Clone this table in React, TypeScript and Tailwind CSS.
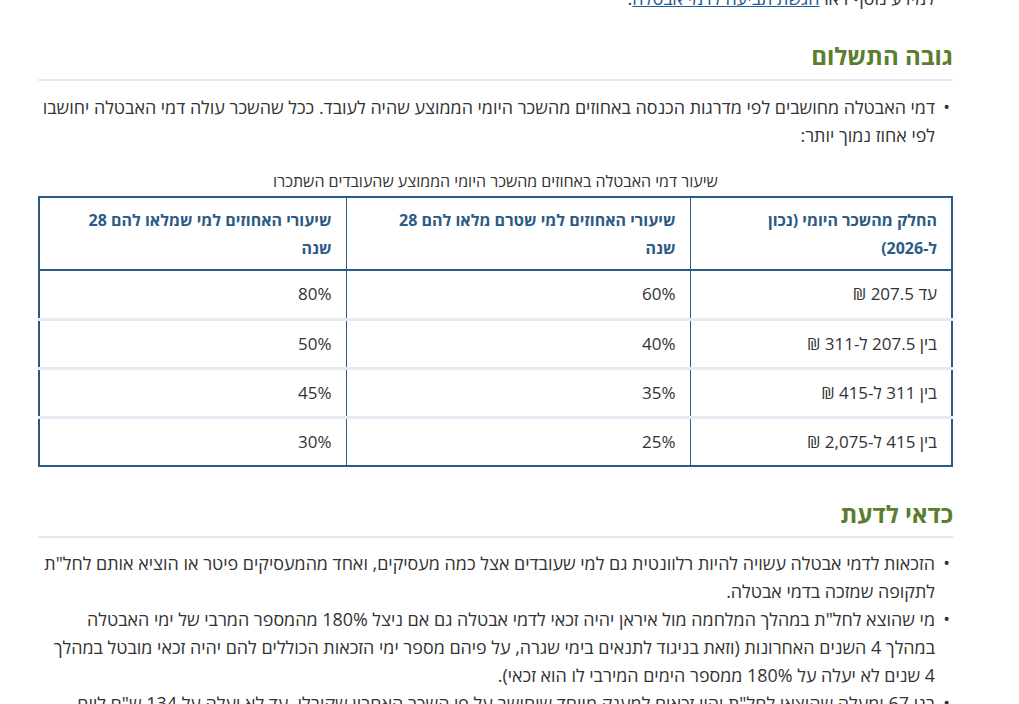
import React from "react";

const rows = [
  ["עד 207.5 ₪", "60%", "80%"],
  ["בין 207.5 ל-311 ₪", "40%", "50%"],
  ["בין 311 ל-415 ₪", "35%", "45%"],
  ["בין 415 ל-2,075 ₪", "25%", "30%"],
];

function Bullet({ children }: { children: React.ReactNode }) {
  return (
    <li className="relative pr-[18px]">
      <span className="absolute right-[3px] top-0">•</span>
      {children}
    </li>
  );
}

export default function App() {
  return (
    <div
      dir="rtl"
      className="w-[1019px] h-[704px] overflow-hidden bg-white text-[#333333] font-['Open_Sans','Noto_Sans',sans-serif] text-[17.9px] leading-[28px]"
    >
      <div className="mr-[66px] ml-[38px] mt-[-16px]">
        <ul>
          <Bullet>
            <span>
              למידע נוסף ראו{" "}
              <a className="text-[#1f5b96] underline">הגשת תביעה לדמי אבטלה</a>.
            </span>
          </Bullet>
        </ul>

        <h2 className="mt-[28px] text-[24px] leading-[32px] font-bold text-[#5b7d2e] pb-[7px] border-b-2 border-[#e2e9f1]">
          גובה התשלום
        </h2>

        <ul className="mt-[12px]">
          <Bullet>
            דמי האבטלה מחושבים לפי מדרגות הכנסה באחוזים מהשכר היומי הממוצע שהיה לעובד. ככל שהשכר עולה דמי האבטלה יחושבו
            <br />
            לפי אחוז נמוך יותר:
          </Bullet>
        </ul>

        <div className="mt-[22px] text-center text-[16px] leading-[20px]">
          שיעור דמי האבטלה באחוזים מהשכר היומי הממוצע שהעובדים השתכרו
        </div>

        <table className="mt-[5px] w-full border-collapse border-2 border-[#2b5a85] text-right">
          <thead>
            <tr className="border-b-2 border-[#2b5a85]">
              <th className="w-[262px] border-l border-[#2b5a85] px-[14px] pt-[8px] pb-[7px] text-[16px] font-bold text-[#2b5a85] leading-[28px] align-top">
                החלק מהשכר היומי (נכון
                <br />
                ל-2026)
              </th>
              <th className="w-[344px] border-l border-[#2b5a85] px-[14px] pt-[8px] pb-[7px] text-[16px] font-bold text-[#2b5a85] leading-[28px] align-top">
                שיעורי האחוזים למי שטרם מלאו להם 28
                <br />
                שנה
              </th>
              <th className="px-[14px] pt-[8px] pb-[7px] text-[16px] font-bold text-[#2b5a85] leading-[28px] align-top">
                שיעורי האחוזים למי שמלאו להם 28
                <br />
                שנה
              </th>
            </tr>
          </thead>
          <tbody>
            {rows.map((r, i) => (
              <tr key={i} className={i < rows.length - 1 ? "border-b-[3px] border-[#e3ebf4]" : ""}>
                <td className="h-[49px] border-l border-[#2b5a85] px-[14px] text-[17px]">{r[0]}</td>
                <td className="border-l border-[#2b5a85] px-[14px] text-[17px]">{r[1]}</td>
                <td className="px-[14px] text-[17px]">{r[2]}</td>
              </tr>
            ))}
          </tbody>
        </table>

        <h2 className="mt-[31px] text-[24px] leading-[32px] font-bold text-[#5b7d2e] pb-[6px] border-b-2 border-[#e2e9f1]">
          כדאי לדעת
        </h2>

        <ul className="mt-[11px]">
          <Bullet>
            הזכאות לדמי אבטלה עשויה להיות רלוונטית גם למי שעובדים אצל כמה מעסיקים, ואחד מהמעסיקים פיטר או הוציא אותם לחל"ת
            <br />
            לתקופה שמזכה בדמי אבטלה.
          </Bullet>
          <Bullet>
            מי שהוצא לחל"ת במהלך המלחמה מול איראן יהיה זכאי לדמי אבטלה גם אם ניצל 180% מהמספר המרבי של ימי האבטלה
            <br />
            במהלך 4 השנים האחרונות (וזאת בניגוד לתנאים בימי שגרה, על פיהם מספר ימי הזכאות הכוללים להם יהיה זכאי מובטל במהלך
            <br />
            4 שנים לא יעלה על 180% ממספר הימים המירבי לו הוא זכאי).
          </Bullet>
          <Bullet>
            בני 67 ומעלה שהוצאו לחל"ת יהיו זכאים למענק מיוחד שיחושב על פי השכר האחרון שקיבלו, עד לא יעלה על 134 ש"ח ליום
          </Bullet>
        </ul>
      </div>
    </div>
  );
}
